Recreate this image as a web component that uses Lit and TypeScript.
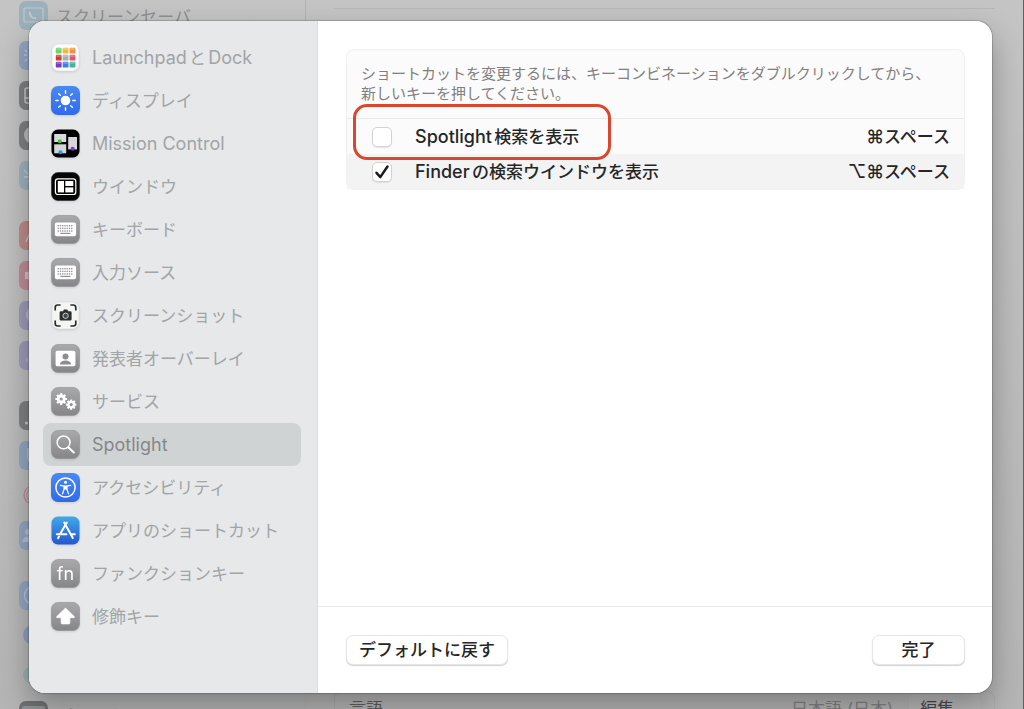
import { LitElement, html, css, svg, nothing } from "lit";
import type { TemplateResult } from "lit";
import { customElement, property, state } from "lit/decorators.js";

type IconName =
  | "launchpad" | "display" | "mission" | "window" | "keyboard" | "capture" | "presenter"
  | "gears" | "search" | "access" | "store" | "fn" | "shift";

const rays = [0, 45, 90, 135, 180, 225, 270, 315];

const grayTile = svg`<rect x="0.5" y="0.5" width="28" height="28" rx="6.5" fill="url(#g)" stroke="#8f8f92" stroke-width="0.6"/>`;

const keyRow = (y: number) =>
  [0, 1, 2, 3, 4, 5, 6].map(
    (i) => svg`<rect x=${6.6 + i * 2.25} y=${y} width="1.3" height="1.4" fill="#929295"/>`
  );

const gear = (cx: number, cy: number, r: number, hole: string) => svg`
  ${rays.map((a) => svg`<rect x=${cx - 1.1} y=${cy - r - 1.4} width="2.2" height="3" rx="0.5" fill="#fff" transform="rotate(${a} ${cx} ${cy})"/>`)}
  <circle cx=${cx} cy=${cy} r=${r} fill="#fff"/>
  <circle cx=${cx} cy=${cy} r="1.6" fill=${hole}/>`;

const pad = [
  ["#6fd36b", "#f0b840", "#ee9440"],
  ["#c7402f", "#a9acae", "#e3506a"],
  ["#7b3bb5", "#3f7fe0", "#48b093"],
];

const glyphs: Record<IconName, () => TemplateResult> = {
  launchpad: () => svg`
    <rect x="1" y="1" width="27" height="27" rx="6.5" fill="#fbfbfc" stroke="#dcdde0" stroke-width="0.6"/>
    ${pad.map((row, r) => row.map((c, i) => svg`
      <rect x=${4.8 + i * 6.9} y=${4.8 + r * 7} width="5.8" height="5.8" rx="1.2" fill=${c}/>
      <rect x=${5.2 + i * 6.9} y=${5 + r * 7} width="5" height="2" rx="1" fill="#fff" fill-opacity="0.22"/>`))}`,
  display: () => svg`
    <rect width="29" height="29" rx="7" fill="url(#b)"/>
    <circle cx="14.5" cy="14.5" r="4.8" fill="#fff"/>
    ${rays.map((a) => svg`<path d="M14.5 4.8V7.2" stroke="#fff" stroke-width="1.4" stroke-linecap="round" transform="rotate(${a} 14.5 14.5)"/>`)}`,
  mission: () => svg`
    <rect x="0.5" y="0.5" width="28" height="28" rx="6.5" fill="#000"/>
    <rect x="3.2" y="5" width="12" height="8" fill="#d9dadb"/>
    <rect x="3.2" y="15.3" width="12" height="9" fill="#d4d5d6"/>
    <rect x="17.2" y="8" width="8.8" height="12.4" fill="#d7d6da"/>
    <circle cx="8.8" cy="12.3" r="2" fill="#45c938"/>
    <circle cx="9.4" cy="23.2" r="2" fill="#2f93ec"/>
    <circle cx="21.6" cy="19.8" r="2" fill="#8238d0"/>`,
  window: () => svg`
    <rect x="0.5" y="0.5" width="28" height="28" rx="6.5" fill="#050505" stroke="#2a2a2a" stroke-width="0.6"/>
    <rect x="4.4" y="6.9" width="20.4" height="15.6" rx="2.6" fill="none" stroke="#fff" stroke-width="1.2"/>
    <rect x="6.8" y="9" width="6.2" height="11.4" fill="#fff"/>
    <rect x="14.3" y="9" width="8" height="5" fill="#fff"/>
    <rect x="14.3" y="15.4" width="8" height="5" fill="#fff"/>`,
  keyboard: () => svg`
    ${grayTile}
    <rect x="3.9" y="7.6" width="21.2" height="13.6" rx="2" fill="#fff"/>
    ${keyRow(10)}${keyRow(12.7)}${keyRow(15.3)}
    <rect x="9.4" y="17.8" width="10" height="1.2" fill="#929295"/>`,
  capture: () => svg`
    <rect x="1" y="1" width="27" height="27" rx="6.5" fill="#f5f5f4" stroke="#d8d9da" stroke-width="0.6"/>
    <path d="M4.2 9.4V6.4a2.4 2.4 0 0 1 2.4-2.4H9.6M19.4 4H22.4a2.4 2.4 0 0 1 2.4 2.4V9.4M24.8 19.6v3a2.4 2.4 0 0 1-2.4 2.4H19.4M9.6 25H6.6a2.4 2.4 0 0 1-2.4-2.4V19.6" fill="none" stroke="#2a2d2e" stroke-width="1.7"/>
    <path d="M10 10.2h2l1-1.6h3.2l1 1.6h2a1.4 1.4 0 0 1 1.4 1.4v6.6a1.4 1.4 0 0 1-1.4 1.4H10a1.4 1.4 0 0 1-1.4-1.4v-6.6a1.4 1.4 0 0 1 1.4-1.4z" fill="#2c2f30"/>
    <circle cx="14.6" cy="14.8" r="2.7" fill="#45494b" stroke="#d8d8d8" stroke-width="0.9"/>`,
  presenter: () => svg`
    ${grayTile}
    <rect x="4.6" y="6.8" width="19.8" height="15.4" rx="1.6" fill="#fff"/>
    <circle cx="14.5" cy="12.6" r="3" fill="#8d8d90"/>
    <path d="M8.8 20.6c.3-2.8 2.8-4 5.7-4s5.4 1.2 5.7 4z" fill="#8d8d90"/>`,
  gears: () => svg`${grayTile}${gear(10.2, 12, 4.5, "#98989b")}${gear(20.2, 17.6, 3.8, "#939396")}`,
  search: () => svg`
    ${grayTile}
    <circle cx="12.6" cy="12.4" r="6.4" fill="none" stroke="#fff" stroke-width="1.5"/>
    <path d="M17.3 17.2l5.5 5.3" stroke="#fff" stroke-width="2" stroke-linecap="round"/>`,
  access: () => svg`
    <rect width="29" height="29" rx="7" fill="url(#b)"/>
    <circle cx="14.5" cy="14.5" r="9.6" fill="none" stroke="#fff" stroke-width="1.5"/>
    <circle cx="14.5" cy="9.3" r="1.5" fill="#fff"/>
    <path d="M9.4 12.3l3.7.8v3l-1.6 4.8M19.6 12.3l-3.7.8v3l1.6 4.8" fill="none" stroke="#fff" stroke-width="1.3" stroke-linecap="round" stroke-linejoin="round"/>
    <path d="M12.9 12.4h3.2v4.2h-3.2z" fill="#fff"/>`,
  store: () => svg`
    <rect width="28" height="28" x="0.5" y="0.5" rx="6.5" fill="url(#s)"/>
    <path d="M15.8 6.6L9.4 17.6M13.2 6.6L21.8 22M5.8 18.3h9.6M19.8 18.3h4M8 20.6l-1 1.5" fill="none" stroke="#fff" stroke-width="2" stroke-linecap="round"/>`,
  fn: () => svg`${grayTile}<text x="14.5" y="20.5" text-anchor="middle" font-family="Inter, sans-serif" font-size="18" fill="#fff">fn</text>`,
  shift: () => svg`
    ${grayTile}
    <path d="M14.5 6l8.8 8.6c.5.5.2 1.100-.4 1.100h-4v5a1.300 1.300 0 0 1-1.300 1.300h-6.200a1.300 1.300 0 0 1-1.300-1.300v-5H6.100c-.6 0-.9-.6-.4-1.100z" fill="#fff" stroke="#fff" stroke-width="0.6" stroke-linejoin="round"/>`,
};

@customElement("pane-icon")
export class PaneIcon extends LitElement {
  @property() name: IconName = "search";

  static styles = css`
    :host { display: block; width: 29px; height: 29px; flex: none; }
    .glyph { display: block; width: 29px; height: 29px; overflow: visible; filter: drop-shadow(0 1px 1px rgba(0, 0, 0, 0.12)); }
  `;

  render() {
    return html`<svg class="glyph" viewBox="0 0 29 29" aria-hidden="true">
      <defs>
        <linearGradient id="g" x1="0" y1="0" x2="0" y2="1"><stop offset="0" stop-color="#a9a9ac"/><stop offset="1" stop-color="#868689"/></linearGradient>
        <linearGradient id="b" x1="0" y1="0" x2="0" y2="1"><stop offset="0" stop-color="#4a89f2"/><stop offset="1" stop-color="#2f6bea"/></linearGradient>
        <linearGradient id="s" x1="0" y1="0" x2="0" y2="1"><stop offset="0" stop-color="#41a9e8"/><stop offset="1" stop-color="#2656d0"/></linearGradient>
      </defs>
      ${glyphs[this.name]()}
    </svg>`;
  }
}

interface Tile { tone: string; mark?: TemplateResult; label?: string; }

const line = (d: string) => svg`<path d=${d} fill="none" stroke="#c4c6c8" stroke-width="1.5"/>`;

const tileGroups: Tile[][] = [
  [
    { tone: "cyan", label: "スクリーンセーバ", mark: svg`<rect x="5" y="7" width="19" height="14" rx="1" fill="none" stroke="#c0cace" stroke-width="1.2"/><path d="M11 11a5 5 0 0 0 6 6" stroke="#c0cace" stroke-width="2" fill="none"/>` },
    { tone: "blue", mark: line("M6 9l2 2M5 14h3M6 20l2-2") },
    { tone: "dark", mark: line("M24 7H8a2 2 0 0 0-2 2v11a2 2 0 0 0 2 2h16M6 17h6") },
    { tone: "dark", mark: svg`<circle cx="14" cy="14" r="9" fill="#b9babb"/>` },
    { tone: "cyan", mark: line("M5 9l4 4M5 16h6M9 21l4-4") },
  ],
  [
    { tone: "red", mark: line("M7 21l5-12") },
    { tone: "pink", mark: svg`<path d="M6 11h3l5-4v15l-5-4H6z" fill="#d1bfc5"/>` },
    { tone: "purple", mark: svg`<circle cx="15" cy="14" r="8" fill="#b9b6cc"/>` },
    { tone: "purple", mark: svg`<rect x="7" y="17" width="3" height="4" fill="#a8a4c0"/>` },
  ],
  [
    { tone: "dark", mark: svg`<circle cx="7.5" cy="22" r="1.5" fill="#c8c8c8"/>` },
    { tone: "blue", mark: line("M9 7v9q0 5 5 6") },
    { tone: "ring", mark: svg`<circle cx="14" cy="14" r="9" fill="none" stroke="#b5898d" stroke-width="1.2"/><circle cx="14" cy="14" r="6.5" fill="none" stroke="#b5898d"/>` },
    { tone: "blue", mark: svg`<circle cx="9" cy="11" r="3" fill="#b4c0d2"/><path d="M3 21q2-7 10-5v5z" fill="#b4c0d2"/>` },
  ],
  [
    { tone: "blue", mark: svg`<circle cx="14.5" cy="14.5" r="9" fill="none" stroke="#b4c0d2" stroke-width="1.5"/>` },
    { tone: "ring", mark: svg`<circle cx="14" cy="14" r="10" fill="#8e9fb8"/>` },
    { tone: "ring", mark: svg`<circle cx="13" cy="14" r="9" fill="#9ab0ad"/>` },
    { tone: "printer", label: "プリンタとスキャナ", mark: svg`<rect x="3" y="5" width="23" height="18" rx="2" fill="#8e959a"/>` },
  ],
];

@customElement("settings-backdrop")
export class SettingsBackdrop extends LitElement {
  static styles = css`
    :host { display: grid; grid-template-columns: 306px 1fr; height: 100%; box-sizing: border-box; border-right: 1px solid #566273; background: linear-gradient(#c4c4c4, #b5b5b5); color: #8f8f8f; }
    .side { display: flex; flex-direction: column; gap: 31px; padding: 1px 0 0 19px; border-right: 1px solid #b2b2b2; overflow: hidden; }
    .group { display: flex; flex-direction: column; gap: 11px; }
    .entry { display: flex; align-items: center; gap: 8px; height: 29px; font-size: 17px; white-space: nowrap; }
    .tile { width: 29px; height: 29px; border-radius: 7px; flex: none; filter: blur(0.5px); }
    .cyan { background: #9db1bc; }
    .blue { background: #92a5c2; }
    .dark { background: #7e8081; }
    .red { background: #bc8b88; }
    .pink { background: #be8b98; }
    .purple { background: #9c9ab6; }
    .printer { background: #707274; }
    .body { display: flex; flex-direction: column; justify-content: space-between; padding: 0 28px; overflow: hidden; }
    .panel { height: 8px; border-bottom: 1px solid #b7b7b7; }
    .language { display: flex; align-items: center; gap: 16px; height: 30px; margin-bottom: -14px; padding: 0 14px; border: 1px solid #adadad; border-radius: 8px; font-size: 17px; color: #606060; }
    .value { margin-left: auto; color: #858585; }
    .edit { height: 28px; padding: 0 11px; border: 0; border-radius: 7px; background: #bababa; color: #4a4a4a; font: inherit; }
  `;

  render() {
    return html`
      <div class="side">
        ${tileGroups.map((group) => html`<div class="group">
          ${group.map((t) => html`<div class="entry">
            <svg class="tile ${t.tone}" viewBox="0 0 29 29" aria-hidden="true">${t.mark ?? nothing}</svg>
            ${t.label ? html`<span>${t.label}</span>` : nothing}
          </div>`)}
        </div>`)}
      </div>
      <div class="body">
        <div class="panel"></div>
        <div class="language">
          <span>言語</span>
          <span class="value">日本語 (日本)</span>
          <button class="edit" tabindex="-1">編集…</button>
        </div>
      </div>`;
  }
}

const panes: { icon: IconName; label: string }[] = [
  { icon: "launchpad", label: "LaunchpadとDock" },
  { icon: "display", label: "ディスプレイ" },
  { icon: "mission", label: "Mission Control" },
  { icon: "window", label: "ウインドウ" },
  { icon: "keyboard", label: "キーボード" },
  { icon: "keyboard", label: "入力ソース" },
  { icon: "capture", label: "スクリーンショット" },
  { icon: "presenter", label: "発表者オーバーレイ" },
  { icon: "gears", label: "サービス" },
  { icon: "search", label: "Spotlight" },
  { icon: "access", label: "アクセシビリティ" },
  { icon: "store", label: "アプリのショートカット" },
  { icon: "fn", label: "ファンクションキー" },
  { icon: "shift", label: "修飾キー" },
];

// Latin words and key symbols are set one pixel larger than the kana and kanji beside them.
const mixed = (text: string) =>
  text
    .split(/([A-Za-z ⌘⌥]+)/)
    .filter(Boolean)
    .map((part) => (/^[A-Za-z⌘⌥]/.test(part) ? html`<span class="latin">${part}</span>` : part));

@customElement("app-root")
export class AppRoot extends LitElement {
  @state() private selected = "Spotlight";
  @state() private shortcuts = [
    { id: "spotlight", label: "Spotlight検索を表示", keys: "⌘スペース", on: false, marked: true },
    { id: "finder", label: "Finderの検索ウインドウを表示", keys: "⌥⌘スペース", on: true, marked: false },
  ];

  static styles = css`
    :host { display: block; position: relative; height: 100vh; overflow: hidden; font-family: Inter, "Noto Sans CJK JP", sans-serif; text-autospace: normal; }
    .sheet { position: absolute; inset: 21px 32px 16px 29px; display: grid; grid-template-columns: 289px 1fr; overflow: hidden; border-radius: 16px; background: #fff; }
    .shade { position: absolute; inset: 21px 32px 16px 29px; border-radius: 16px; box-shadow: 0 0 1px 1px rgba(0, 0, 0, 0.18), 0 14px 30px rgba(0, 0, 0, 0.3); }
    .latin { font-size: 18px; }
    .panes { box-sizing: border-box; padding: 15px 16px 0 14px; background: #e6e8ea; border-right: 1px solid #dadcde; }
    .pane { display: flex; align-items: center; gap: 12px; height: 43px; padding-left: 8px; border-radius: 8px; color: #a2a4a6; font-size: 17px; line-height: 24px; text-decoration: none; white-space: nowrap; }
    .current { background: #d0d3d3; color: #858889; }
    .content { display: flex; flex-direction: column; min-width: 0; }
    .scroll { flex: 1; padding: 28px 27px 0 28px; }
    .card { border: 1px solid #f1f1f1; border-radius: 8px; background: #fbfbfb; }
    .hint { margin: 0; padding: 14px; color: #808080; font-size: 15px; line-height: 20px; }
    .list { width: 100%; border-collapse: separate; border-spacing: 0; color: #262626; font-size: 17px; font-weight: 500; line-height: 24px; border-top: 1px solid #e9e9e9; }
    .cell { height: 35px; padding: 0; box-sizing: border-box; }
    .cell:first-child { position: relative; padding-left: 25px; }
    .cell:last-child { padding-right: 14px; text-align: right; }
    .row:nth-child(even) { background: #f3f3f3; }
    .option { display: flex; align-items: center; gap: 23px; }
    .box { appearance: none; display: grid; place-items: center; width: 20px; height: 20px; margin: 0; border: 1px solid #d2d2d2; border-radius: 5px; background: #fff; box-shadow: 0 1px 1px rgba(0, 0, 0, 0.08); }
    .tick { position: absolute; left: 25px; width: 20px; height: 20px; pointer-events: none; }
    .mark { position: absolute; z-index: 1; left: 6px; top: -15px; box-sizing: border-box; width: 258px; height: 56px; border: 3px solid #d9482d; border-radius: 14px; pointer-events: none; }
    .footer { display: flex; justify-content: space-between; padding: 28px 27px 28px 28px; border-top: 1px solid #ececec; }
    .button { box-sizing: border-box; height: 30px; min-width: 93px; padding: 0 12px; border: 1px solid #e6e6e6; border-radius: 7px; background: #fff; box-shadow: 0 1px 1px rgba(0, 0, 0, 0.18); color: #262626; font: 500 17px/24px Inter, "Noto Sans CJK JP", sans-serif; }
  `;

  private toggle(id: string) {
    this.shortcuts = this.shortcuts.map((s) => (s.id === id ? { ...s, on: !s.on } : s));
  }

  render() {
    return html`
      <settings-backdrop></settings-backdrop>
      <div class="shade"></div>
      <div class="sheet" role="dialog" aria-label="ショートカット">
        <nav class="panes">
          ${panes.map((p) => html`<a class="pane ${p.label === this.selected ? "current" : ""}" href="#" @click=${() => (this.selected = p.label)}>
            <pane-icon .name=${p.icon}></pane-icon><span>${mixed(p.label)}</span>
          </a>`)}
        </nav>
        <main class="content">
          <div class="scroll">
            <section class="card">
              <p class="hint">ショートカットを変更するには、キーコンビネーションをダブルクリックしてから、<br>新しいキーを押してください。</p>
              <table class="list">
                <tbody>
                  ${this.shortcuts.map((s) => html`<tr class="row">
                    <td class="cell">
                      <div class="option">
                        <input class="box" type="checkbox" id=${s.id} .checked=${s.on} @change=${() => this.toggle(s.id)}>
                        ${s.on ? html`<svg class="tick" viewBox="0 0 20 20" aria-hidden="true"><path d="M4.5 10.8l3.8 4.3 7.2-10.6" fill="none" stroke="#1c1c1c" stroke-width="2.5" stroke-linecap="round" stroke-linejoin="round"/></svg>` : nothing}
                        <label for=${s.id}>${mixed(s.label)}</label>
                      </div>
                      ${s.marked ? html`<div class="mark"></div>` : nothing}
                    </td>
                    <td class="cell">${mixed(s.keys)}</td>
                  </tr>`)}
                </tbody>
              </table>
            </section>
          </div>
          <footer class="footer">
            <button class="button">デフォルトに戻す</button>
            <button class="button">完了</button>
          </footer>
        </main>
      </div>`;
  }
}
